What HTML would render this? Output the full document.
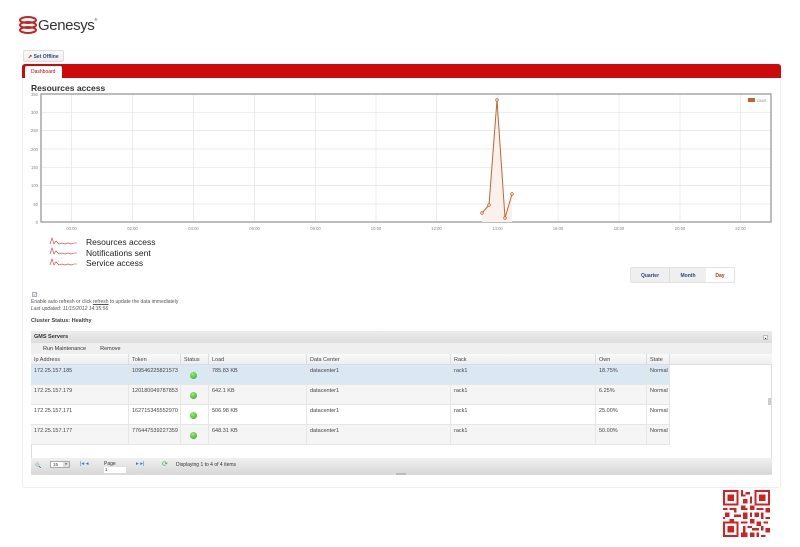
<!DOCTYPE html>
<html><head><meta charset="utf-8"><style>
*{margin:0;padding:0;box-sizing:border-box}
body{width:800px;height:547px;background:#fff;font-family:"Liberation Sans",sans-serif;position:relative;overflow:hidden;color:#333}
.a{position:absolute}
.s{font-size:5px;color:#555}
.t{font-size:5.5px;color:#444}
</style></head><body>
<svg class="a" style="left:18px;top:16px" width="20" height="18" viewBox="0 0 20 18">
<ellipse cx="10" cy="4" rx="8" ry="3" fill="none" stroke="#c8211f" stroke-width="2"/>
<ellipse cx="10" cy="9" rx="8" ry="3" fill="none" stroke="#c8211f" stroke-width="2"/>
<ellipse cx="10" cy="14" rx="8" ry="3" fill="none" stroke="#c8211f" stroke-width="2"/>
</svg>
<div class="a" style="left:38px;top:17px;font-size:15px;color:#333;letter-spacing:-0.4px">Genesys<span style="font-size:4px;vertical-align:top">®</span></div>
<div class="a" style="left:23px;top:50px;width:41px;height:12px;border:1px solid #ddd;border-radius:2px;background:linear-gradient(#fafafa,#eee);font-size:5px;color:#2a4a7a;padding:3px 0 0 4px;font-weight:bold"><span style="color:#c00">➚</span> Set Offline</div>
<div class="a" style="left:22px;top:64px;width:759px;height:424px;border:1px solid #eee;border-radius:3px"></div>
<div class="a" style="left:22px;top:64px;width:759px;height:14px;background:#cc0a0a;border-radius:3px 3px 0 0"></div>
<div class="a" style="left:25px;top:66px;width:37px;height:12px;background:#fff;border-radius:2px 2px 0 0;font-size:5px;color:#c00;padding:3px 0 0 6px">Dashboard</div>
<div class="a" style="left:31px;top:83px;font-size:8.5px;font-weight:bold;color:#333">Resources access</div>
<svg class="a" style="left:0;top:0" width="800" height="270">
<g stroke="#e4e4e4" stroke-width="0.7">
<line x1="41" y1="112.3" x2="771" y2="112.3"/><line x1="41" y1="130.6" x2="771" y2="130.6"/><line x1="41" y1="149" x2="771" y2="149"/><line x1="41" y1="167.3" x2="771" y2="167.3"/><line x1="41" y1="185.6" x2="771" y2="185.6"/><line x1="41" y1="204" x2="771" y2="204"/>
<line x1="71.5" y1="94" x2="71.5" y2="222"/><line x1="132.5" y1="94" x2="132.5" y2="222"/><line x1="193.5" y1="94" x2="193.5" y2="222"/><line x1="254.5" y1="94" x2="254.5" y2="222"/><line x1="315.5" y1="94" x2="315.5" y2="222"/><line x1="376" y1="94" x2="376" y2="222"/><line x1="436.5" y1="94" x2="436.5" y2="222"/><line x1="497.5" y1="94" x2="497.5" y2="222"/><line x1="558" y1="94" x2="558" y2="222"/><line x1="619" y1="94" x2="619" y2="222"/><line x1="680" y1="94" x2="680" y2="222"/><line x1="740.5" y1="94" x2="740.5" y2="222"/>
</g>
<rect x="41" y="94" width="730" height="128" fill="none" stroke="#999" stroke-width="1.3"/>
<polygon points="482,213 489,205 497,100 505,218 512,194 512,222 482,222" fill="#fbf1ec"/>
<polyline points="482,213 489,205 497,100 505,218" fill="none" stroke="#c2662e" stroke-width="1"/>
<line x1="505" y1="218" x2="512" y2="194" stroke="#c2662e" stroke-width="1"/>
<g fill="#fff" stroke="#c2662e" stroke-width="0.8"><circle cx="482" cy="213" r="1.3"/><circle cx="489" cy="205" r="1.3"/><circle cx="497" cy="100" r="1.3"/><circle cx="505" cy="218" r="1.3"/><circle cx="512" cy="194" r="1.3"/></g>
<rect x="748" y="98" width="7" height="4" fill="#c2662e"/>
<text x="757" y="102" font-size="4" fill="#888" font-family="Liberation Sans">DNIS</text>
<g font-size="4.2" fill="#888" font-family="Liberation Sans" text-anchor="end">
<text x="38" y="96">350</text><text x="38" y="114">300</text><text x="38" y="132">250</text><text x="38" y="151">200</text><text x="38" y="169">150</text><text x="38" y="187">100</text><text x="38" y="206">50</text><text x="38" y="224">0</text></g>
<g font-size="4.2" fill="#888" font-family="Liberation Sans" text-anchor="middle">
<text x="71.5" y="230">00:00</text><text x="132.5" y="230">02:00</text><text x="193.5" y="230">04:00</text><text x="254.5" y="230">06:00</text><text x="315.5" y="230">08:00</text><text x="376" y="230">10:00</text><text x="436.5" y="230">12:00</text><text x="497.5" y="230">14:00</text><text x="558" y="230">16:00</text><text x="619" y="230">18:00</text><text x="680" y="230">20:00</text><text x="740.5" y="230">22:00</text></g>
<g fill="none" stroke="#d33" stroke-width="0.6">
<path d="M50 244 l2 -6 l2 6 l2 -3 l3 3 l3 -1 l3 1 l3 -1 l3 1 l3 -1 l3 0"/>
<path d="M50 254 l2 -6 l2 6 l2 -3 l3 3 l3 -1 l3 1 l3 -1 l3 1 l3 -1 l3 0"/>
<path d="M50 265 l2 -6 l2 6 l2 -3 l3 3 l3 -1 l3 1 l3 -1 l3 1 l3 -1 l3 0"/>
</g>
</svg>
<div class="a" style="left:86px;top:237px;font-size:8.5px;line-height:10.5px;color:#222">Resources access<br>Notifications sent<br>Service access</div>
<div class="a" style="left:630px;top:267px;width:105px;height:16px;border:1px solid #e3e3e3;border-radius:2px;display:flex;font-size:5px;font-weight:bold">
<div style="width:39px;background:#efefef;border-right:1px solid #ddd;color:#2a4a7a;text-align:center;padding-top:5px">Quarter</div>
<div style="width:36px;background:#efefef;color:#2a4a7a;text-align:center;padding-top:5px">Month</div>
<div style="flex:1;color:#d22;text-align:center;padding-top:5px">Day</div></div>
<div class="a" style="left:32px;top:292px;width:5px;height:5px;border:1px solid #aac;font-size:4px;line-height:4px;color:#336">✓</div>
<div class="a s" style="left:31px;top:299px">Enable auto refresh or click <u>refresh</u> to update the data immediately</div>
<div class="a s" style="left:31px;top:306px;font-style:italic">Last updated: 11/15/2012 14:35:56</div>
<div class="a" style="left:31px;top:318px;font-size:5.5px;font-weight:bold;color:#444">Cluster Status: Healthy</div>
<div class="a" style="left:31px;top:331px;width:741px;height:144px;border:1px solid #ddd"></div>
<div class="a" style="left:31px;top:331px;width:741px;height:12px;background:linear-gradient(#ececec,#ddd);font-size:5.5px;font-weight:bold;padding:3px 0 0 3px;color:#333">GMS Servers</div>
<div class="a" style="left:763px;top:335px;width:5px;height:5px;background:#fff;border:1px solid #bbb;font-size:3px;text-align:center">▲</div>
<div class="a" style="left:31px;top:343px;width:741px;height:11px;background:#efefef;font-size:5.5px;padding:2.5px 0 0 12px;color:#333">Run Maintenance<span style="margin-left:14px">Remove</span></div>
<div class="a" style="left:31px;top:354px;width:741px;height:11px;background:linear-gradient(#fafafa,#eee);border-bottom:1px solid #ddd"></div>
<div id="g" class="a" style="left:31px;top:354px"></div>
<div class="a" style="left:31px;top:458px;width:741px;height:16px;background:linear-gradient(#f0f0f0,#d8d8d8);font-size:5px;color:#333"></div>
<div class="a" style="left:35px;top:463px;font-size:5px;color:#88a">🔍</div>
<div class="a" style="left:50px;top:461px;width:20px;height:7px;border:1px solid #aaa;background:#fff;font-size:4.5px;padding-left:2px">15<span style="float:right;width:6px;height:5px;background:#ddd;font-size:3px;text-align:center">▼</span></div>
<div class="a" style="left:80px;top:461px;font-size:5.5px;color:#37c">|◂ ◂</div>
<div class="a" style="left:104px;top:461px;font-size:5px">Page</div>
<div class="a" style="left:104px;top:467px;width:22px;height:6px;background:#fff;font-size:4.5px;padding-left:1px">1</div>
<div class="a" style="left:136px;top:461px;font-size:5.5px;color:#37c">▸ ▸|</div>
<div class="a" style="left:162px;top:460px;font-size:7px;color:#4a4">⟳</div>
<div class="a" style="left:176px;top:462px;font-size:5px">Displaying 1 to 4 of 4 items</div>
<div class="a" style="left:396px;top:473px;width:10px;height:2px;background:#bbb"></div>
<div class="a" style="left:768px;top:398px;width:3px;height:7px;background:#ccc"></div>
<svg class="a" style="left:723px;top:490px" width="47" height="47" viewBox="0 0 21 21" shape-rendering="crispEdges" fill="#d42020">
<path d="M0 0h7v7h-7zM1 1v5h5v-5zM2 2h3v3h-3zM14 0h7v7h-7zM15 1v5h5v-5zM16 2h3v3h-3zM0 14h7v7h-7zM1 15v5h5v-5zM2 16h3v3h-3z" fill-rule="evenodd"/>
<path d="M8 0h1v2h1v1h-2zM10 1h2v1h-2zM12 3h1v3h-1zM9 4h2v2h-2zM8 7h2v1h1v1h-3zM0 8h2v1h-2zM3 8h3v2h-1v-1h-2zM12 7h2v2h-2zM15 8h3v1h-3zM19 8h2v2h-2zM1 10h2v2h-2zM5 11h3v1h-3zM9 10h2v3h-2zM12 10h1v2h-1zM14 10h2v2h-2zM17 10h1v3h-1zM19 12h2v1h-2zM0 12h1v1h-1zM3 13h2v1h-2zM8 14h3v1h-3zM12 13h2v2h-2zM15 14h2v2h-2zM18 14h2v1h-2zM9 16h1v3h-1zM11 16h2v1h-2zM13 17h3v1h-3zM17 16h1v2h-1zM19 17h2v2h-2zM8 19h3v2h-3zM12 19h2v2h-2zM15 19h1v2h-1zM17 20h2v1h-2z"/>
</svg>
<script>
var cols=[[0,98,"Ip Address"],[98,52,"Token"],[150,28,"Status"],[178,98,"Load"],[276,144,"Data Center"],[420,145,"Rack"],[565,51,"Own"],[616,23,"State"]];
var rows=[["172.25.157.185","109546225821573","","785.83 KB","datacenter1","rack1","18.75%","Normal"],["172.25.157.179","120180049787853","","642.1 KB","datacenter1","rack1","6.25%","Normal"],["172.25.157.171","162715345552970","","506.98 KB","datacenter1","rack1","25.00%","Normal"],["172.25.157.177","776447539227359","","648.31 KB","datacenter1","rack1","50.00%","Normal"]];
var h="";
cols.forEach(function(c){h+='<div class="a t" style="left:'+c[0]+'px;top:0;width:'+c[1]+'px;height:11px;border-right:1px solid #ddd;padding:3px 0 0 3px;overflow:hidden;white-space:nowrap">'+c[2]+'</div>';});
rows.forEach(function(r,i){var y=11+i*20;var bg=i==0?'#d9e8f3':(i%2?'#f5f5f5':'#fff');
h+='<div class="a" style="left:0;top:'+y+'px;width:639px;height:20px;background:'+bg+';border-bottom:1px solid #e6e6e6"></div>';
cols.forEach(function(c,j){h+='<div class="a t" style="left:'+c[0]+'px;top:'+y+'px;width:'+c[1]+'px;height:20px;border-right:1px solid #e6e6e6;padding:3px 0 0 3px;overflow:hidden;white-space:nowrap">'+(j==2?'<div style="width:7px;height:7px;border-radius:50%;background:radial-gradient(circle at 40% 30%,#9e6,#2a2);margin:4px 0 0 6px"></div>':r[j])+'</div>';});});
document.getElementById('g').innerHTML=h;
</script>
</body></html>
